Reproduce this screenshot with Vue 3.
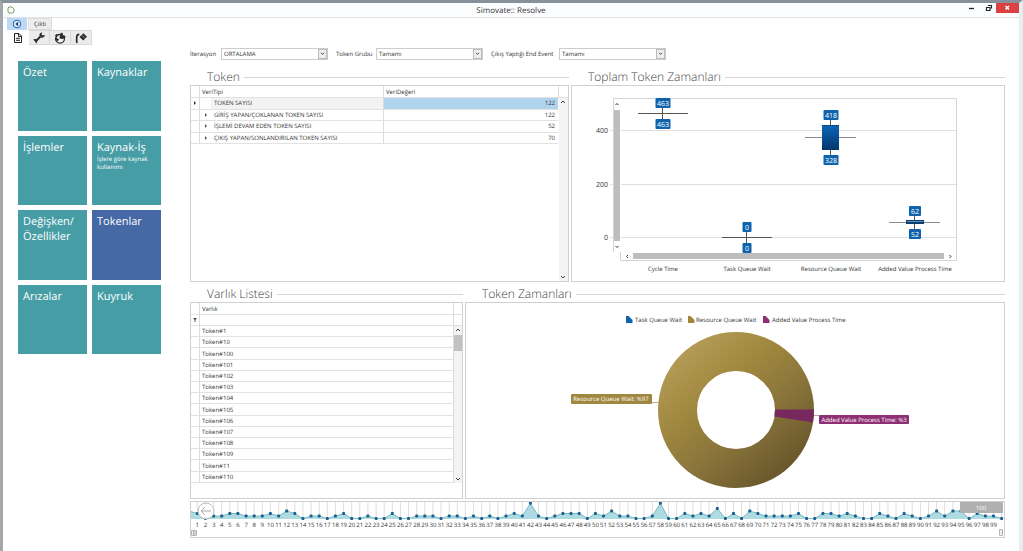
<script setup>
import { ref } from 'vue'

const tiles = [
  { title: 'Özet' },
  { title: 'Kaynaklar' },
  { title: 'İşlemler' },
  { title: 'Kaynak-İş', note: 'İşlere göre kaynak kullanımı' },
  { title: 'Değişken/ Özellikler' },
  { title: 'Tokenlar' },
  { title: 'Arızalar' },
  { title: 'Kuyruk' },
]
const active = ref('Tokenlar')

const filters = [
  { id: 'iteration', label: 'İterasyon', value: 'ORTALAMA', size: 'short' },
  { id: 'group', label: 'Token Grubu', value: 'Tamamı', size: 'medium' },
  { id: 'event', label: 'Çıkış Yaptığı End Event', value: 'Tamamı', size: 'long' },
]

const tokenRows = [
  { name: 'TOKEN SAYISI', value: 122, selected: true },
  { name: 'GİRİŞ YAPAN/ÇOKLANAN TOKEN SAYISI', value: 122 },
  { name: 'İŞLEMİ DEVAM EDEN TOKEN SAYISI', value: 52 },
  { name: 'ÇIKIŞ YAPAN/SONLANDIRILAN TOKEN SAYISI', value: 70 },
]

const entities = [1, 10, 100, 101, 102, 103, 104, 105, 106, 107, 108, 109, 11, 110]

const boxLabels = [
  { x: 663, y: 103, w: 15, t: '463' },
  { x: 663, y: 124, w: 15, t: '463' },
  { x: 747, y: 227, w: 9, t: '0' },
  { x: 747, y: 248, w: 9, t: '0' },
  { x: 831, y: 115, w: 15, t: '418' },
  { x: 831, y: 160, w: 15, t: '328' },
  { x: 915, y: 211, w: 12, t: '62' },
  { x: 915, y: 234, w: 12, t: '52' },
]
const categories = [
  { x: 663, t: 'Cycle Time' },
  { x: 747, t: 'Task Queue Wait' },
  { x: 831, t: 'Resource Queue Wait' },
  { x: 915, t: 'Added Value Process Time' },
]

const counts = [
  3, 2, 0, 1, 1, 2, 2, 1, 1, 1, 2, 1, 3, 2, 0, 1, 1, 0, 1, 2, 0, 0, 1, 0, 0,
  2, 0, 0, 1, 1, 1, 0, 1, 1, 0, 1, 0, 1, 0, 1, 2, 1, 6, 1, 0, 1, 2, 2, 2, 0,
  2, 1, 3, 1, 1, 0, 0, 1, 6, 0, 0, 2, 1, 2, 1, 4, 0, 2, 0, 3, 2, 1, 1, 1, 1,
  2, 0, 0, 2, 2, 1, 2, 1, 0, 0, 2, 1, 0, 2, 1, 0, 1, 3, 1, 3, 3, 0, 2, 1, 1, 0,
]
const points = counts.map((v, i) => ({
  i,
  x: +(189.2 + i * 8.124).toFixed(1),
  y: +(518.6 - v * 2.55).toFixed(1),
}))
const line = points.map((p) => `${p.x},${p.y}`).join(' ')
const area = `${points[0].x},519 ${line} ${points[100].x},519`
</script>

<template>
  <div class="window">
    <header class="titlebar">
      <svg class="logo" viewBox="0 0 8 8"><path d="M2 1h3l2 2v3L5.500 7H2L1 6V2z" fill="none" stroke="#7b9d63" stroke-width="1" /></svg>
      <h1>Simovate:: Resolve</h1>
      <div class="winbuttons">
        <button aria-label="Minimize"><svg viewBox="0 0 20 10"><path d="M7 5.500h5" stroke="#222" stroke-width="1.300" /></svg></button>
        <button aria-label="Restore"><svg viewBox="0 0 14 10"><path d="M6 2.500h3.500v3M4.500 4.500h3.500v3h-3.500z" fill="none" stroke="#222" stroke-width="1.200" /></svg></button>
        <button class="close" aria-label="Close"><svg viewBox="0 0 23 10"><path d="M9.500 3l3.500 3.500M13 3L9.500 6.500" stroke="#fff" stroke-width="1.400" /></svg></button>
      </div>
    </header>

    <nav class="tabs">
      <button class="back" aria-label="Geri">
        <svg viewBox="0 0 10 10"><circle cx="5" cy="5" r="3.800" fill="#dcecfb" stroke="#2c5fa0" /><path d="M6.200 2.800v4.400L3.300 5z" fill="#1c3f78" /></svg>
      </button>
      <button class="output">Çıktı</button>
    </nav>
    <nav class="tools">
      <button class="on" aria-label="Rapor">
        <svg viewBox="0 0 12 12"><path d="M2.500 1.500h4.500l2.500 2.500v6.500h-7zM6.500 1.500v3h3M4 6.300h4M4 8.300h4" fill="none" stroke="#222" /></svg>
      </button>
      <button aria-label="Ayarlar">
        <svg viewBox="0 0 12 12"><path d="M2.500 9.500L7.500 4.500" stroke="#2b2b2b" stroke-width="1.900" /><path d="M9.300.5L8.500 2.600l1 1 2.200-.8c.2 1.900-1.300 3.300-3.200 2.900L6.400 3.600C6.200 1.800 7.500.4 9.300.5zM.4 7.600c1.400-1 3-.4 3.700.8.4 1.200 0 2.500-1.200 3.200l-.4-1.800-1-.8z" fill="#2b2b2b" /></svg>
      </button>
      <button aria-label="Küre">
        <svg viewBox="0 0 12 12"><circle cx="6" cy="6.800" r="4.400" fill="#f4f4f4" stroke="#2b2b2b" stroke-width="1.300" /><path d="M5.500 6.500L6 2l2-1.500 1 1.500L8.300 4l2.700-.5.500 2-3 1.500zM5 7.500L3.500 9.500 1.500 7.500l.5-2zM.8 3.500l2-1.500 1.700 1.300L2.700 5z" fill="#2b2b2b" /></svg>
      </button>
      <button aria-label="Yakıt">
        <svg viewBox="0 0 12 12"><path d="M1.700 11V5Q1.700 2.500 4.300 2.300" fill="none" stroke="#2b2b2b" stroke-width="1.700" /><path d="M4.500 5l3.800-3.700L12 4.800 8.300 8.500z" fill="#2b2b2b" /><path d="M6.200 2.600l4 4" stroke="#eee" stroke-width=".5" /></svg>
      </button>
    </nav>

    <div class="content">
      <aside class="tiles">
        <button v-for="t in tiles" :key="t.title" class="tile" :class="{ active: t.title === active }" @click="active = t.title">
          <span class="name">{{ t.title }}</span>
          <span v-if="t.note" class="note">{{ t.note }}</span>
        </button>
      </aside>

      <main>
        <form class="filters">
          <div v-for="f in filters" :key="f.id" class="filter">
            <label :for="f.id" :class="f.size">{{ f.label }}</label>
            <div class="combo">
              <select :id="f.id"><option>{{ f.value }}</option></select>
              <span class="drop"><svg viewBox="0 0 8 8"><path d="M2.300 3.200L4 5l1.700-1.800" fill="none" stroke="#333" /></svg></span>
            </div>
          </div>
        </form>

        <div class="row upper">
          <section>
            <h2>Token</h2>
            <div class="panel grid">
              <table class="tokens">
                <thead>
                  <tr><th class="mark"></th><th>VeriTipi</th><th class="val">VeriDeğeri</th></tr>
                </thead>
                <tbody>
                  <tr v-for="r in tokenRows" :key="r.name" :class="{ selected: r.selected }">
                    <td class="mark"><svg v-if="r.selected" viewBox="0 0 4 4"><path d="M1 0l2 2-2 2z" fill="#333" /></svg></td>
                    <td class="type">
                      <div><span class="expand"><svg v-if="!r.selected" viewBox="0 0 4 4"><path d="M1 0l2 2-2 2z" fill="#555" /></svg></span><span class="label">{{ r.name }}</span></div>
                    </td>
                    <td class="val">{{ r.value }}</td>
                  </tr>
                </tbody>
              </table>
              <div class="scroll">
                <div class="cap"></div>
                <div class="track">
                  <svg viewBox="0 0 8 8"><path d="M2 5l2-2 2 2" fill="none" stroke="#444" /></svg>
                  <svg viewBox="0 0 8 8"><path d="M2 3l2 2 2-2" fill="none" stroke="#444" /></svg>
                </div>
              </div>
            </div>
          </section>

          <section>
            <h2>Toplam Token Zamanları</h2>
            <div class="panel">
              <svg class="chart" viewBox="572 86 432 195" role="img" aria-label="Toplam Token Zamanları">
                <defs>
                  <linearGradient id="box" x1="0" y1="0" x2="0" y2="1"><stop offset="0" stop-color="#0b66b8" /><stop offset="1" stop-color="#03376a" /></linearGradient>
                </defs>
                <path d="M613.500 98.500H956.500V260.500H620.500V98.500M613.500 98.500V252" fill="none" stroke="#d4d4d4" />
                <path d="M610 130.500H956M610 184.500H956M610 237.500H956" stroke="#dedede" />
                <rect x="614" y="99" width="7" height="153" fill="#fff" />
                <rect x="614" y="110" width="6" height="131" fill="#bdbdbd" />
                <rect x="633" y="253" width="311" height="6" fill="#bdbdbd" />
                <path d="M615.500 105l1.500-1.500 1.500 1.500M615.500 246l1.500 1.500 1.500-1.500M628 255l-1.500 1.500 1.500 1.500M949.500 255l1.500 1.500-1.500 1.500" fill="none" stroke="#333" />
                <g class="axis end scale">
                  <text x="608" y="133">400</text><text x="608" y="187">200</text><text x="608" y="240">0</text>
                </g>
                <path d="M662.500 107V120M638 113.500H688M746.500 231V244M722 237.500H772M830.500 119V126M830.500 150V156M914.500 215V230" stroke="#555" />
                <path d="M805 137.500H856M889 222.500H940" stroke="#8a8a8a" />
                <rect x="822" y="125" width="17" height="25" fill="url(#box)" />
                <path d="M822 125.500H839" stroke="#06294c" stroke-dasharray="1 1" />
                <rect x="906" y="220" width="18" height="4" fill="#0c3e70" /><path d="M907 221.500h16" stroke="#5f93bf" />
                <g v-for="(b, i) in boxLabels" :key="i" class="scale">
                  <rect :x="b.x - b.w / 2" :y="b.y - 5" :width="b.w" height="10" rx="1" fill="#0f63ad" />
                  <text class="tag" :x="b.x" :y="b.y + 3">{{ b.t }}</text>
                </g>
                <g class="axis mid"><text v-for="c in categories" :key="c.t" :x="c.x" y="271">{{ c.t }}</text></g>
              </svg>
            </div>
          </section>
        </div>

        <div class="row lower">
          <section>
            <h2>Varlık Listesi</h2>
            <div class="panel grid">
              <table class="entities">
                <thead>
                  <tr><th class="mark"></th><th>Varlık</th></tr>
                  <tr class="search"><td class="mark"><svg viewBox="0 0 4 4"><path d="M0 0h4L2.500 2v2h-1V2z" fill="#555" /></svg></td><td></td></tr>
                </thead>
                <tbody>
                  <tr v-for="n in entities" :key="n"><td class="mark"></td><td>Token#{{ n }}</td></tr>
                </tbody>
              </table>
              <div class="scroll listscroll">
                <div class="cap"></div>
                <div class="cap second"></div>
                <div class="track">
                  <svg viewBox="0 0 8 8"><path d="M2 5l2-2 2 2" fill="none" stroke="#444" /></svg>
                  <div class="thumb"></div>
                  <svg viewBox="0 0 8 8"><path d="M2 3l2 2 2-2" fill="none" stroke="#444" /></svg>
                </div>
              </div>
            </div>
          </section>

          <section>
            <h2>Token Zamanları</h2>
            <div class="panel">
              <svg class="chart" viewBox="466 303 538 195" role="img" aria-label="Token Zamanları">
                <defs>
                  <linearGradient id="gold" gradientUnits="userSpaceOnUse" x1="690" y1="350" x2="795" y2="475"><stop offset="0" stop-color="#b39a54" /><stop offset=".3" stop-color="#a0873f" /><stop offset=".6" stop-color="#88733a" /><stop offset="1" stop-color="#64532a" /></linearGradient>
                </defs>
                <g>
                  <path d="M626 316h2.500l4 4v3h-6.500z" fill="#0f63ad" /><path d="M688 316h2.500l4 4v3h-6.500z" fill="#a0873f" /><path d="M763 316h2.500l4 4v3h-6.500z" fill="#8d2f72" />
                </g>
                <g class="axis"><text x="635" y="322">Task Queue Wait</text><text x="696" y="322">Resource Queue Wait</text><text x="772" y="322">Added Value Process Time</text></g>
                <circle cx="736" cy="410" r="58.500" fill="none" stroke="url(#gold)" stroke-width="39" />
                <path d="M775 409.500H814Q814 416 813 422.500L774.500 416.500Z" fill="#76285f" />
                <path d="M652 402.500h7M814 415.500h5" stroke="#b9a9a0" />
                <rect x="571" y="394" width="81" height="10" rx="1" fill="#a0873f" />
                <rect x="819" y="415" width="90" height="9" rx="1" fill="#8d2f72" />
                <text class="tag" x="611" y="401">Resource Queue Wait: %97</text>
                <text class="tag" x="864" y="422">Added Value Process Time: %3</text>
              </svg>
            </div>
          </section>
        </div>

        <section class="panel timeline">
          <svg class="chart" viewBox="191 502 813 35" role="img" aria-label="Zaman çizelgesi">
            <path v-for="p in points" :key="'g' + p.i" :d="`M${p.x} 502V519`" stroke="#dedede" />
            <polygon :points="area" fill="#aedbe1" />
            <polyline :points="line" fill="none" stroke="#7db9c4" />
            <rect v-for="p in points" :key="'p' + p.i" :x="p.x - 1.5" :y="p.y - 1.5" width="3" height="3" rx="1" fill="#17608f" />
            <g class="axis mid"><text v-for="p in points.slice(1, 100)" :key="'t' + p.i" :x="p.x" y="527">{{ p.i }}</text></g>
            <circle cx="206" cy="511" r="8" fill="#fff" fill-opacity=".9" stroke="#bbb" />
            <path d="M211 511H201.500M205 507l-4 4 4 4" fill="none" stroke="#aaa" />
            <rect x="960" y="502" width="43" height="11" fill="#b0b0b0" />
            <text class="tag" x="981" y="510">100</text>
            <path d="M191.500 530.500h5v5h-5zM193.500 530v6M195 530v6M999.500 529.500h3v6h-3z" fill="#eee" stroke="#b5b5b5" />
          </svg>
        </section>
      </main>
    </div>
  </div>
</template>

<style>
body {
  margin: 0;
}
</style>

<style scoped>
* {
  box-sizing: border-box;
}
.window {
  display: flex;
  flex-direction: column;
  min-height: 100vh;
  border-top: 3px solid #87919b;
  border-left: 3px solid #a3a8ac;
  border-right: 4px solid #e3f0ef;
  border-bottom: 1px solid #d2d2d2;
  background: #fff;
  color: #333;
  font: 6px/10px "Open Sans", "Noto Sans", sans-serif;
  text-rendering: geometricPrecision;
}
button,
select {
  margin: 0;
  padding: 0;
  border: 0;
  background: none;
  color: inherit;
  font: inherit;
  text-rendering: inherit;
}
svg {
  display: block;
}
.titlebar {
  display: grid;
  grid-template-columns: 1fr auto 1fr;
  height: 15px;
  border-bottom: 1px solid #dfe3e8;
  background: #fcfdfe;
}
.logo {
  width: 8px;
  height: 8px;
  margin: 3px 0 0 4px;
}
h1 {
  margin: 0;
  font-size: 8px;
  line-height: 15px;
  font-weight: 400;
}
.winbuttons {
  display: flex;
  justify-content: flex-end;
  height: 10px;
}
.winbuttons svg {
  height: 10px;
}
.close {
  background: #dc4141;
}
.tabs {
  display: flex;
  gap: 1px;
  height: 12px;
  padding-left: 4px;
}
.back {
  display: grid;
  place-items: center;
  width: 20px;
  background: #bcd8f5;
}
.back svg {
  width: 10px;
  height: 10px;
}
.output {
  width: 24px;
  background: #ededed;
  border: 1px solid #ddd;
}
.tools {
  display: flex;
  height: 15px;
  padding-left: 5px;
}
.tools button {
  display: grid;
  place-items: center;
  width: 21px;
  background: #ebebeb;
  border: 1px solid #d8d8d8;
  border-left: 0;
}
.tools .on {
  background: #fff;
  border-color: #fff;
}
.tools svg {
  width: 12px;
  height: 12px;
}
.content {
  display: flex;
  align-items: flex-start;
}
.tiles {
  display: grid;
  grid-template-columns: 69px 69px;
  grid-auto-rows: 1fr;
  gap: 5px;
  height: 309px;
  padding: 16px 0 0 15px;
}
.tile {
  display: flex;
  flex-direction: column;
  padding: 4px 5px;
  background: #479da5;
  color: #fff;
  text-align: left;
}
.tile.active {
  background: #4668a5;
}
.name {
  font-size: 11px;
  line-height: 15px;
}
.note {
  line-height: 8px;
}
main {
  flex: 1;
  min-width: 0;
  margin-left: 29px;
  padding: 2px 14px 13px 0;
}
.filters {
  display: flex;
  gap: 8px;
  height: 13px;
}
.filter {
  display: flex;
  align-items: center;
  white-space: nowrap;
}
.short {
  width: 31px;
}
.medium {
  width: 40px;
}
.long {
  width: 68px;
}
.combo {
  display: flex;
  width: 107px;
  height: 12px;
  border: 1px solid #ccc;
}
select {
  flex: 1;
  min-width: 0;
  padding-left: 2px;
  appearance: none;
  color: #333;
}
.drop {
  width: 9px;
  height: 10px;
  border: 1px solid #bbb;
  background: #eee;
}
.row {
  display: grid;
  column-gap: 2px;
}
.upper {
  grid-template-columns: 379fr 434fr;
  margin-top: 9px;
}
.lower {
  grid-template-columns: 273fr 540fr;
  margin-top: 4px;
}
.row section {
  display: flex;
  flex-direction: column;
  min-width: 0;
}
h2 {
  display: flex;
  align-items: center;
  gap: 4px;
  margin: 0;
  padding-left: 17px;
  font-size: 12px;
  line-height: 16px;
  font-weight: 300;
  color: #444;
}
h2::after {
  content: "";
  flex: 1;
  height: 1px;
  background: #d5d5d5;
}
.panel {
  flex: 1;
  border: 1px solid #d0d0d0;
  background: #fff;
}
.chart {
  width: 100%;
  height: auto;
}
.chart text {
  font-size: 6px;
}
.chart .scale text {
  font-size: 7px;
}
.axis {
  fill: #333;
}
.end {
  text-anchor: end;
}
.mid,
.chart .tag {
  text-anchor: middle;
}
.tag {
  fill: #fff;
}
.grid {
  display: flex;
  align-items: flex-start;
}
table {
  flex: 1;
  border-collapse: separate;
  border-spacing: 0;
  table-layout: fixed;
  width: 100%;
}
th,
td {
  height: 11px;
  padding: 0 2px;
  border-bottom: 1px solid #e2e2e2;
  border-right: 1px solid #dcdcdc;
  font-weight: 400;
  text-align: left;
  line-height: 10px;
  white-space: nowrap;
}
thead th {
  height: 12px;
}
.tokens {
  height: 58px;
}
.mark {
  width: 9px;
}
.mark svg,
.expand svg {
  width: 4px;
  height: 4px;
}
th.val {
  width: 175px;
}
td.val {
  padding-right: 3px;
  text-align: right;
  border-right-color: #fff;
}
.type div {
  display: flex;
  align-items: center;
}
.expand {
  width: 12px;
  padding-left: 2px;
}
.selected .label {
  flex: 1;
}
.selected .type {
  background: linear-gradient(90deg, #fff 11px, #f3f3f3 11px);
}
.selected .val {
  background: #b0d3ee;
}
.scroll {
  display: flex;
  flex-direction: column;
  align-self: stretch;
  width: 9px;
}
.cap {
  height: 12px;
  border-bottom: 1px solid #e2e2e2;
}
.track {
  display: flex;
  flex: 1;
  flex-direction: column;
  justify-content: space-between;
  background: #f3f3f3;
}
.scroll svg {
  width: 8px;
  height: 8px;
}
.entities {
  height: 180px;
}
.listscroll {
  align-self: flex-start;
  width: 8px;
  height: 180px;
}
.second {
  height: 11px;
}
.thumb {
  height: 16px;
  margin: 1px 0 auto;
  background: #c2c2c2;
}
.timeline {
  margin-top: 2px;
}
</style>
